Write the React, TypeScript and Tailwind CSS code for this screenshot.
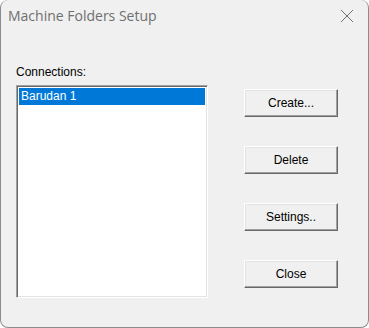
import React from "react";

const buttons = ["Create...", "Delete", "Settings..", "Close"];

const App: React.FC = () => {
  return (
    <div className="w-[369px] h-[328px] bg-white">
      <div className="w-full h-full bg-[#f0f0f0] rounded-[8px] border-l border-r border-b border-[#8c8c8c] flex flex-col overflow-hidden">
        {/* title bar */}
        <div className="h-[31px] flex items-center justify-between pl-[7px] pr-[14px] shrink-0">
          <span className="text-[14px] text-[#6f6f6f]" style={{ fontFamily: '"Open Sans", "Noto Sans", sans-serif' }}>
            Machine Folders Setup
          </span>
          <svg width="14" height="14" viewBox="0 0 14 14" fill="none" stroke="#6f6f6f" strokeWidth="1">
            <path d="M1 1 13 13M13 1 1 13" />
          </svg>
        </div>

        {/* client area */}
        <div className="flex flex-1 pt-[35px]" style={{ fontFamily: '"Liberation Sans", Arial, sans-serif' }}>
          <div className="pl-[15px] flex flex-col">
            <span className="text-[12px] leading-[13px] text-black">Connections:</span>
            <div className="mt-[6px] w-[192px] h-[213px] bg-white border border-t-[#a0a0a0] border-l-[#a0a0a0] border-b-white border-r-white shadow-[inset_1px_1px_0_#696969,inset_-1px_-1px_0_#e3e3e3] p-[2px]">
              <div className="h-[17px] bg-[#0078d7] text-white text-[12px] leading-[17px] pl-[2px]">Barudan 1</div>
            </div>
          </div>

          <div className="ml-[36px] pt-[23px] flex flex-col gap-[29px]">
            {buttons.map((b) => (
              <button
                key={b}
                className="w-[94px] h-[28px] bg-[#f0f0f0] text-[12px] text-black border border-t-white border-l-white border-b-[#696969] border-r-[#696969] shadow-[inset_-1px_-1px_0_#a0a0a0,inset_1px_1px_0_#e3e3e3]"
              >
                {b}
              </button>
            ))}
          </div>
        </div>
      </div>
    </div>
  );
};

export default App;
